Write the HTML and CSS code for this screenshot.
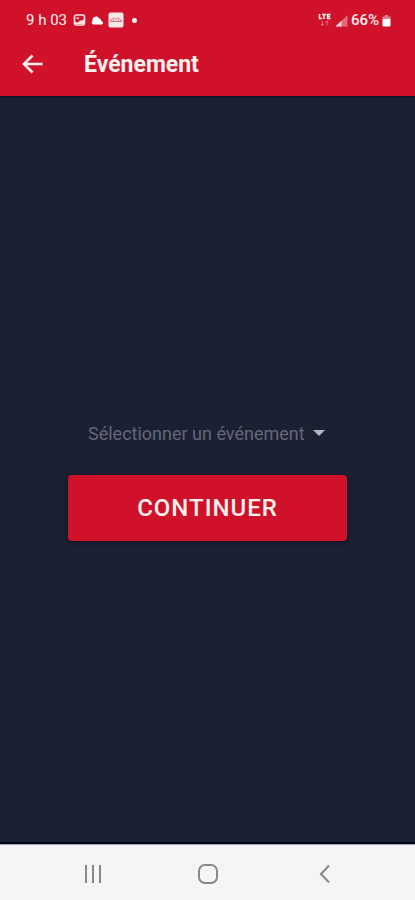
FILE: index.html
```html
<!DOCTYPE html>
<html lang="fr">
<head>
<meta charset="utf-8">
<meta name="viewport" content="width=device-width, initial-scale=1">
<title>Événement</title>
<link rel="stylesheet" href="styles.css">
</head>
<body>
<header class="top">
  <div class="status">
    <div class="status-group">
      <span class="time">9 h 03</span>
      <svg width="13" height="12" viewBox="0 0 13 12" aria-hidden="true">
        <rect x="1.500" y="1" width="10" height="10" rx="2" fill="none" stroke="#fbe3e5" stroke-width="1.600"/>
        <path d="M2 10V8L5 8.500L7 6.500H9L11 5V10Z" fill="#fbe3e5"/>
        <path d="M3.500 3.500h2.500v1.500h-2.500z" fill="#fbe3e5"/>
      </svg>
      <svg width="14" height="12" viewBox="0 0 14 12" aria-hidden="true">
        <path d="M3 10.500A2.500 2.500 0 0 1 2.500 6.500A3.600 3.600 0 0 1 9.300 4.500A2.500 2.500 0 0 1 11.300 6.900A1.900 1.900 0 0 1 12 10.500Z" fill="#fff"/>
      </svg>
      <svg width="16" height="16" viewBox="0 0 16 16" aria-hidden="true">
        <rect x="0.500" y="0.500" width="15" height="15" rx="2" fill="#fbe9ea"/>
        <path d="M2 9.500H14M3 9C3 6 7 5 8 7.500C9 5 12 6 13 9M5 9V7.500M10.500 9V7.500" fill="none" stroke="#d9707a"/>
      </svg>
      <span class="dot"></span>
    </div>
    <div class="status-group status-right">
      <svg width="14" height="14" viewBox="0 0 14 14" aria-hidden="true">
        <path d="M1.500 1V5.500H4M4 1.500H8M6 1.500V6M12.500 1.500H9.500V5.500H12.500M9.500 3.500H12" fill="none" stroke="#fff" stroke-width="1.400"/>
        <path d="M4.500 8V12.500M3 11L4.500 12.500L6 11M9 12.500V8M7.500 9.500L9 8L10.500 9.500" fill="none" stroke="#e4707d"/>
      </svg>
      <svg width="13" height="13" viewBox="0 0 13 13" aria-hidden="true">
        <path d="M0.500 12.500L12.500 1V12.500Z" fill="#e2687a"/>
        <path d="M0.500 12.500L6.500 6.700V12.500Z" fill="#f9d5d9"/>
      </svg>
      <span class="battery">66%</span>
      <svg width="9" height="13" viewBox="0 0 9 13" aria-hidden="true">
        <path d="M3 1h3v1.500h2.500V6h-8V2.500H3Z" fill="#e57f8b"/>
        <path d="M0.500 5h8v6.500q0 1-1 1h-6q-1 0-1-1Z" fill="#fff"/>
      </svg>
    </div>
  </div>
  <div class="bar">
    <button class="back" type="button" aria-label="Retour">
      <svg width="22" height="20" viewBox="0 0 22 20" aria-hidden="true">
        <path d="M20.500 10H2.500M10.500 1.500L2 10L10.500 18.500" fill="none" stroke="#fff1f0" stroke-width="2.500"/>
      </svg>
    </button>
    <h1 class="title">Événement</h1>
  </div>
</header>
<main class="content">
  <div class="picker">
    <select class="select" aria-label="Événement">
      <option>Sélectionner un événement</option>
    </select>
    <svg class="caret" width="14" height="7" viewBox="0 0 14 7" aria-hidden="true"><path d="M0 0H12L6 6Z" fill="#b4b6bf"/></svg>
  </div>
  <button class="continue" type="button">CONTINUER</button>
</main>
<nav class="nav">
  <button type="button" aria-label="Applications récentes">
    <svg width="20" height="20" viewBox="0 0 20 20" aria-hidden="true"><path d="M3 1V19M10 1V19M17 1V19" stroke="#888" stroke-width="2"/></svg>
  </button>
  <button type="button" aria-label="Accueil">
    <svg width="20" height="20" viewBox="0 0 20 20" aria-hidden="true"><rect x="1" y="1" width="18" height="18" rx="6" fill="none" stroke="#888" stroke-width="2"/></svg>
  </button>
  <button type="button" aria-label="Précédent">
    <svg width="20" height="20" viewBox="0 0 20 20" aria-hidden="true"><path d="M17 1.500L9 10L17 18.500" fill="none" stroke="#888" stroke-width="2"/></svg>
  </button>
</nav>
</body>
</html>
```
FILE: styles.css
```css
* { box-sizing: border-box; }

body {
  margin: 0;
  min-height: 100vh;
  display: flex;
  flex-direction: column;
  background: #1c2033;
  font-family: Roboto, "Liberation Sans", sans-serif;
}

button {
  border: 0;
  padding: 0;
  background: none;
  font-family: inherit;
}

svg { display: block; }

.top {
  background: #cf122a;
  color: #fff1f0;
  box-shadow: 0 1px 2px #0c0f20;
}

.status {
  display: flex;
  justify-content: space-between;
  height: 40px;
  padding: 0 24px 0 26px;
  font-size: 15px;
}

.status-group {
  display: flex;
  align-items: center;
  gap: 4px;
}

.status-right { gap: 3px; }

.time { margin-right: 2px; }

.battery { font-weight: 500; }

.dot {
  width: 5px;
  height: 5px;
  margin-left: 4px;
  border-radius: 50%;
  background: #fff1f0;
}

.bar {
  display: flex;
  align-items: center;
  height: 56px;
  padding: 0 22px 8px;
  gap: 40px;
}

.title {
  margin: 0;
  font-size: 23px;
  font-weight: 700;
}

.content {
  flex: 1;
  display: flex;
  flex-direction: column;
  align-items: center;
  justify-content: center;
  gap: 8px;
}

.picker {
  position: relative;
  display: flex;
  align-items: center;
}

.select {
  height: 68px;
  padding: 0 22px 0 0;
  border: 0;
  appearance: none;
  background: transparent;
  color: #646779;
  font-family: inherit;
  font-size: 18px;
}

.caret {
  position: absolute;
  right: 0;
  pointer-events: none;
}

.continue {
  width: 67%;
  height: 66px;
  border-radius: 4px;
  background: #cf122a;
  box-shadow: 0 1px 4px #0c0f20;
  color: #fff1f0;
  font-size: 24px;
  font-weight: 500;
  letter-spacing: 1px;
}

.nav {
  display: flex;
  align-items: center;
  justify-content: space-between;
  height: 56px;
  padding: 3px 20% 0;
  border-top: 1px solid #a5a5ad;
  box-shadow: 0 -2px 0 #03051a;
  background: #f5f5f5;
}
```
